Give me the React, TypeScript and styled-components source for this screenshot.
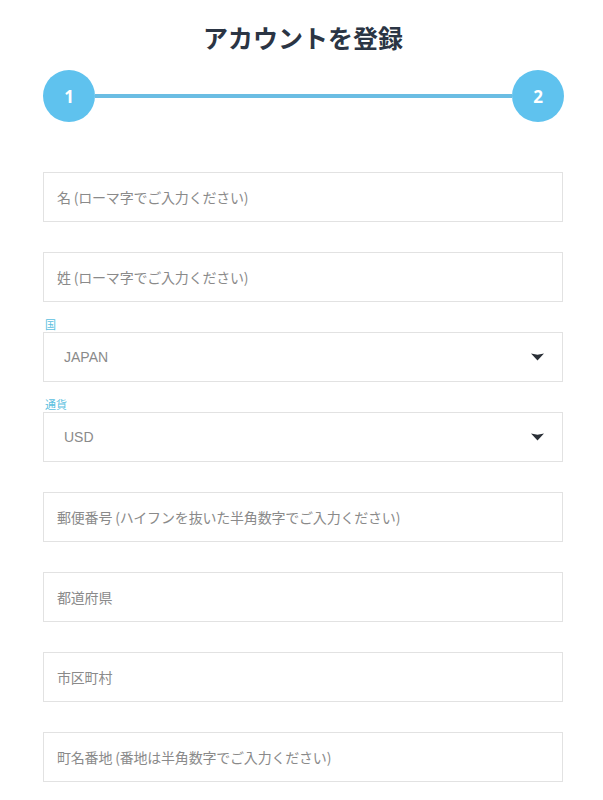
import * as React from 'react';
import styled, {createGlobalStyle} from 'styled-components';

const GlobalStyle = createGlobalStyle`
  body {
    margin: 0;
    background: #ffffff;
    font-family: "Open Sans", "Noto Sans CJK JP", sans-serif;
  }
`

const Page = styled.div`
  width: 520px;
  padding: 0 40px 0 43px;
`
const Title = styled.h1`
  margin: 0;
  padding-top: 21px;
  height: 70px;
  width: 520px;
  box-sizing: border-box;
  text-align: center;
  font-family: "Noto Sans CJK JP", sans-serif;
  font-size: 25px;
  font-weight: 700;
  line-height: 32px;
  color: #2b3544;
`
const Stepper = styled.div`
  display: flex;
  align-items: center;
  width: 521px;
  height: 52px;
`
const Step = styled.div`
  width: 52px;
  height: 52px;
  flex: none;
  border-radius: 50%;
  background: #5fc2ee;
  color: #ffffff;
  display: flex;
  align-items: center;
  justify-content: center;
  font-family: "Open Sans", sans-serif;
  font-weight: 700;
  font-size: 17px;
`
const StepLine = styled.div`
  flex: 1;
  height: 4px;
  background: #6bbde3;
`
const Form = styled.div`
  margin-top: 20px;
  display: flex;
  flex-direction: column;
`
const Field = styled.div`
  display: flex;
  flex-direction: column;
`
const LabelSlot = styled.div`
  height: 30px;
  display: flex;
  align-items: flex-end;
`
const Label = styled.label`
  font-family: "Noto Sans CJK JP", sans-serif;
  font-size: 11px;
  line-height: 14px;
  color: #5bbfe0;
  margin-left: 2px;
  margin-bottom: 1px;
`
const Input = styled.input`
  box-sizing: border-box;
  width: 520px;
  height: 50px;
  border: 1px solid #e2e2e2;
  border-radius: 0;
  padding: 0 13px;
  font-family: "Noto Sans CJK JP", sans-serif;
  font-size: 14px;
  letter-spacing: -0.2px;
  color: #555;
  outline: none;
  &::placeholder {
    color: #8a8a8a;
  }
`
const SelectBox = styled.div`
  box-sizing: border-box;
  width: 520px;
  height: 50px;
  border: 1px solid #e2e2e2;
  padding: 0 18px 0 20px;
  display: flex;
  align-items: center;
  justify-content: space-between;
  font-family: "Liberation Sans", Arial, sans-serif;
  font-size: 14px;
  color: #8a8a8a;
`

const Arrow = () => (
    <svg width="13" height="8" viewBox="0 0 13 8">
        <path d="M0 0.5 L6.5 1.8 L13 0.5 L6.5 7.5 Z" fill="#2a2f36"/>
    </svg>
)

type fieldProps = {
    label?: string;
    placeholder?: string;
    value?: string;
}

const TextField = ({label, placeholder}: fieldProps) => (
    <Field>
        <LabelSlot>{label && <Label>{label}</Label>}</LabelSlot>
        <Input placeholder={placeholder}/>
    </Field>
)

const SelectField = ({label, value}: fieldProps) => (
    <Field>
        <LabelSlot>{label && <Label>{label}</Label>}</LabelSlot>
        <SelectBox>
            <span>{value}</span>
            <Arrow/>
        </SelectBox>
    </Field>
)

export default function App() {
    return (
        <>
            <GlobalStyle/>
            <Page>
                <Title>アカウントを登録</Title>
                <Stepper>
                    <Step>1</Step>
                    <StepLine/>
                    <Step>2</Step>
                </Stepper>
                <Form>
                    <TextField placeholder="名 (ローマ字でご入力ください)"/>
                    <TextField placeholder="姓 (ローマ字でご入力ください)"/>
                    <SelectField label="国" value="JAPAN"/>
                    <SelectField label="通貨" value="USD"/>
                    <TextField placeholder="郵便番号 (ハイフンを抜いた半角数字でご入力ください)"/>
                    <TextField placeholder="都道府県"/>
                    <TextField placeholder="市区町村"/>
                    <TextField placeholder="町名番地 (番地は半角数字でご入力ください)"/>
                </Form>
            </Page>
        </>
    )
}
